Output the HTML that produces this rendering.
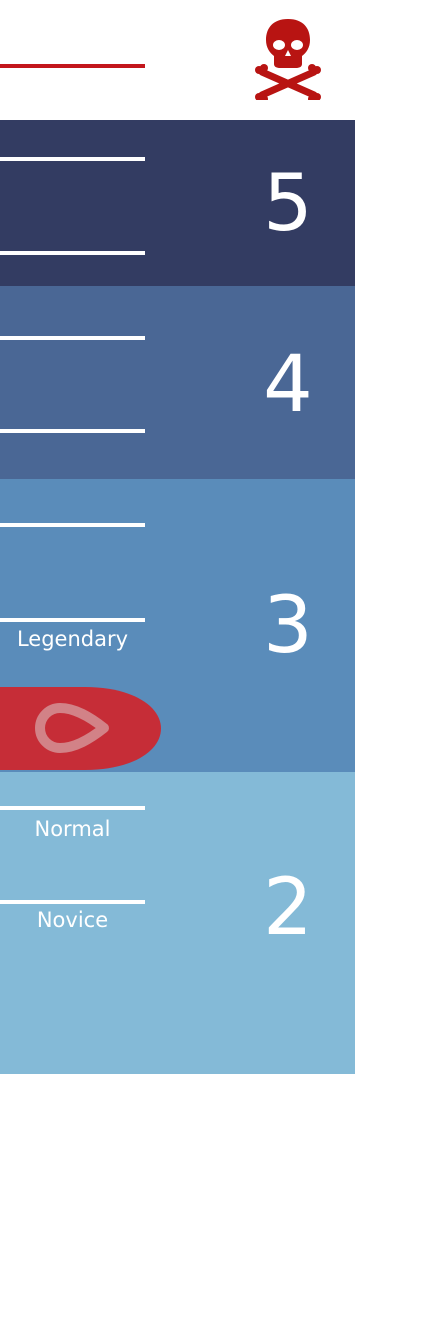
<!DOCTYPE html>
<html><head><style>
body{margin:0;width:441px;height:1335px;background:#fff;position:relative;overflow:hidden;font-family:"DejaVu Sans","Liberation Sans",sans-serif}
div{position:absolute}
.l{left:0;width:145px;height:4px;background:#fff}
.n{color:#fff;font-size:78px;width:100px;text-align:center;left:238px;line-height:1}
.t{color:#fff;font-size:21px;width:145px;text-align:center;left:0;line-height:1}
</style></head><body>
<div style="left:0;top:64px;width:145px;height:4px;background:#c3161c"></div>
<svg style="position:absolute;left:254px;top:18px" width="68" height="82" viewBox="0 0 68 82">
<g fill="#b81412">
<path d="M34 1C19 1 12 10 12 22c0 8 4 13 8 16v8c0 3 3 4 6 4h16c3 0 6-1 6-4v-8c4-3 8-8 8-16C56 10 49 1 34 1z"/>
</g>
<g stroke="#b81412" stroke-width="7" stroke-linecap="round"><line x1="8" y1="54" x2="60" y2="77"/><line x1="60" y1="54" x2="8" y2="77"/></g>
<g fill="#b81412"><circle cx="5" cy="52" r="4"/><circle cx="5" cy="79" r="4"/><circle cx="63" cy="52" r="4"/><circle cx="63" cy="79" r="4"/><circle cx="10" cy="50" r="4"/><circle cx="10" cy="81" r="4"/><circle cx="58" cy="50" r="4"/><circle cx="58" cy="81" r="4"/></g>
<g fill="#fff"><ellipse cx="25" cy="27" rx="6" ry="5"/><ellipse cx="43" cy="27" rx="6" ry="5"/><path d="M34 32l-3 6h6z"/></g>
</svg>
<div style="left:0;top:120px;width:355px;height:166px;background:#333c62"></div>
<div style="left:0;top:286px;width:355px;height:193px;background:#4a6795"></div>
<div style="left:0;top:479px;width:355px;height:293px;background:#5a8cba"></div>
<div style="left:0;top:772px;width:355px;height:302px;background:#84bad7"></div>
<div class="l" style="top:157px"></div><div class="l" style="top:251px"></div>
<div class="l" style="top:336px"></div><div class="l" style="top:429px"></div>
<div class="l" style="top:523px"></div><div class="l" style="top:618px"></div>
<div class="l" style="top:806px"></div><div class="l" style="top:900px"></div>
<div class="n" style="top:165px">5</div>
<div class="n" style="top:346px">4</div>
<div class="n" style="top:587px">3</div>
<div class="n" style="top:869px">2</div>
<div class="t" style="top:629px">Legendary</div>
<div class="t" style="top:819px">Normal</div>
<div class="t" style="top:910px">Novice</div>
<svg style="position:absolute;left:0;top:687px;display:block" width="162" height="84" viewBox="0 0 162 84"><path d="M0 0H85C132 0 161 19 161 41.5S132 83 85 83H0z" fill="#c62d37"/><path d="M104 41C90 30 75 21 60 21A20 20 0 0 0 60 61C75 61 90 52 104 41z" fill="none" stroke="#d28287" stroke-width="10" stroke-linejoin="round"/></svg>
</body></html>
